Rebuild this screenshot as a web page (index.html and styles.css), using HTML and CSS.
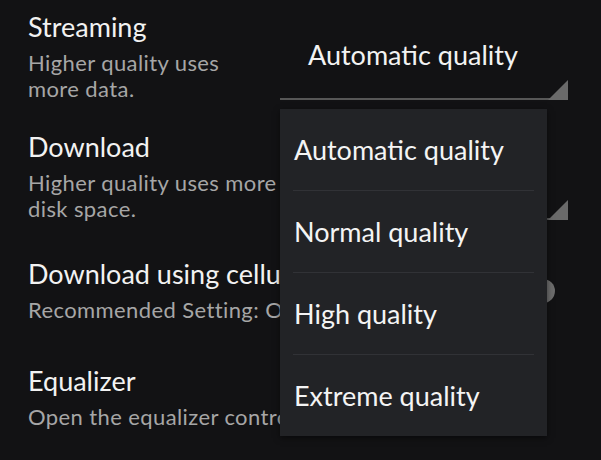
FILE: index.html
```html
<!DOCTYPE html>
<html lang="en">
<head>
  <meta charset="UTF-8" />
  <title>Settings</title>
  <link rel="stylesheet" href="styles.css">
</head>
<body>

  <div class="settings">
    <div class="row">
      <div class="info">
        <div class="title">Streaming</div>
        <div class="desc">Higher quality uses more data.</div>
      </div>
      <div class="spinner">Automatic quality</div>
    </div>

    <div class="row">
      <div class="info">
        <div class="title">Download</div>
        <div class="desc">Higher quality uses more disk space.</div>
      </div>
      <!-- value hidden behind the open menu -->
      <div class="spinner spinner-short"></div>
    </div>

    <div class="row">
      <div class="info">
        <div class="title">Download using cellular</div>
        <div class="desc">Recommended Setting: Off</div>
      </div>
      <div class="switch"></div>
    </div>

    <div class="row">
      <div class="info">
        <div class="title">Equalizer</div>
        <div class="desc">Open the equalizer controls.</div>
      </div>
    </div>
  </div>

  <ul class="menu">
    <li>Automatic quality</li>
    <li>Normal quality</li>
    <li>High quality</li>
    <li>Extreme quality</li>
  </ul>

</body>
</html>
```

FILE: styles.css
```css
body {
    margin: 0;
    background-color: #121214;
    font-family: Lato, "Liberation Sans", sans-serif;
    color: #f2f2f2;
    overflow: hidden;
}
.settings {
    margin-top: -3px;
}
.row {
    display: flex;
    align-items: center;
    gap: 16px;
    min-height: 107px;
    padding: 15px 33px 15px 28px;
    box-sizing: border-box;
}
.info {
    flex: 1;
    min-width: 0;
}
.title {
    font-size: 27px;
    line-height: 30px;
    white-space: nowrap;
}
.desc {
    margin-top: 8px;
    font-size: 22px;
    line-height: 26px;
    letter-spacing: 0.4px;
    color: #a6a6a6;
}
.row:nth-child(3) .desc,
.row:nth-child(4) .desc {
    white-space: nowrap;
}
.spinner {
    position: relative;
    flex: none;
    width: 260px;
    min-height: 32px;
    padding: 25px 0 27px 28px;
    font-size: 27px;
    line-height: 32px;
    border-bottom: 2px solid #575757;
}
.spinner::after {
    content: "";
    position: absolute;
    right: 0;
    bottom: -2px;
    width: 20px;
    height: 20px;
    background: #6a6a6a;
    clip-path: polygon(100% 0, 100% 100%, 0 100%);
}
.spinner-short {
    width: 231px;
}
.switch {
    flex: none;
    width: 24px;
    height: 24px;
    margin-right: 13px;
    border-radius: 50%;
    background: #6c6c6c;
}
.menu {
    position: absolute;
    left: 280px;
    top: 109px;
    width: 267px;
    margin: 0;
    padding: 0;
    list-style: none;
    background: #222326;
    box-shadow: 0 2px 6px rgba(0,0,0,0.5);
}
.menu li {
    margin: 0 13px;
    padding: 25px 1px 24px;
    font-size: 27px;
    line-height: 32px;
    color: #f4f4f4;
}
.menu li + li {
    border-top: 1px solid #313236;
}
```
